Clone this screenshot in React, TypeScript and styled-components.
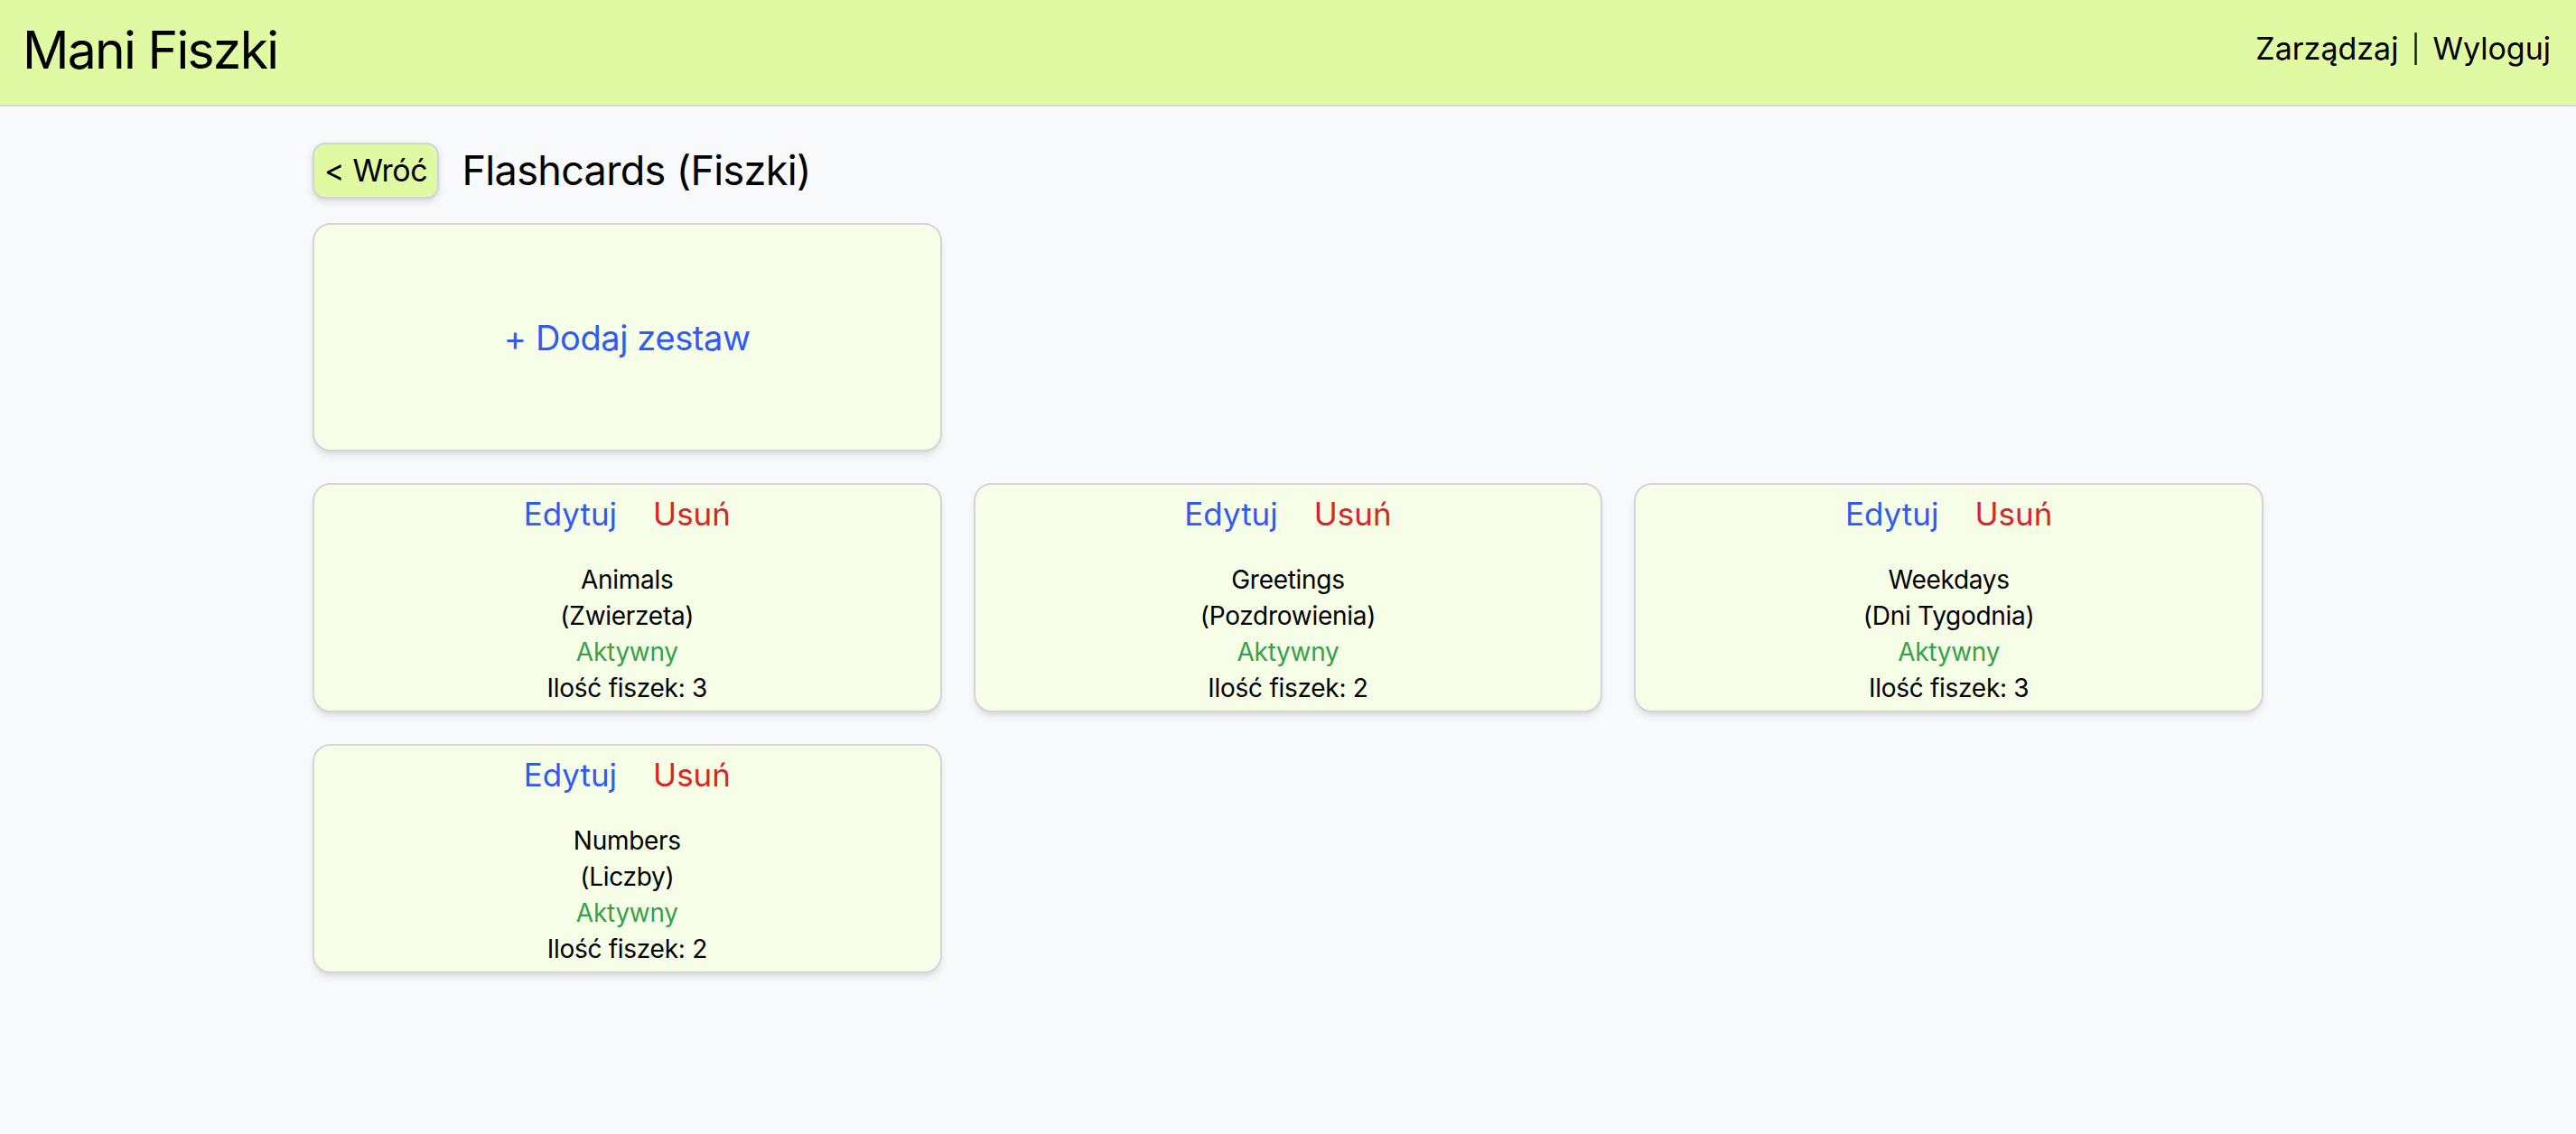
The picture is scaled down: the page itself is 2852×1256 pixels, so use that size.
import React from "react";
import styled, { createGlobalStyle } from "styled-components";

const GlobalStyle = createGlobalStyle`
  html, body {
    margin: 0;
    padding: 0;
    background: #f8f9fb;
    font-family: Inter, "Noto Sans", "DejaVu Sans", sans-serif;
    color: #000;
  }
  * { box-sizing: border-box; }
`;

const Page = styled.div`
  min-height: 1256px;
  background: #f8f9fb;
`;

const Header = styled.header`
  height: 118px;
  background: #e0f9a3;
  border-bottom: 2px solid #d3d5db;
  display: flex;
  align-items: center;
  justify-content: space-between;
  padding: 0 28px 0 25px;
`;

const Brand = styled.div`
  font-size: 57px;
  line-height: 1;
  font-weight: 400;
  letter-spacing: -0.03em;
  margin-top: -6px;
`;

const Nav = styled.nav`
  display: flex;
  align-items: center;
  font-size: 34px;
  line-height: 1;
  margin-top: -8px;
`;

const NavLink = styled.a`
  color: #000;
  text-decoration: none;
  cursor: pointer;
`;

const Divider = styled.span`
  margin: 0 14px;
  font-size: 30px;
  color: #111;
`;

const Main = styled.main`
  width: 2160px;
  margin: 0 auto;
  padding-top: 40px;
`;

const TitleRow = styled.div`
  display: flex;
  align-items: center;
  gap: 25px;
  margin-bottom: 27px;
`;

const BackButton = styled.button`
  height: 62px;
  padding: 0 11px;
  background: #e0f9a3;
  border: 2px solid #d3d5db;
  border-radius: 14px;
  box-shadow: 0 4px 8px rgba(0, 0, 0, 0.1), 0 1px 3px rgba(0, 0, 0, 0.08);
  font-family: inherit;
  font-size: 34px;
  letter-spacing: -0.01em;
  line-height: 1;
  color: #000;
  cursor: pointer;
`;

const Title = styled.h1`
  margin: 0;
  font-size: 45px;
  font-weight: 400;
  line-height: 1.2;
  letter-spacing: -0.015em;
`;

const Grid = styled.div`
  display: grid;
  grid-template-columns: repeat(3, 1fr);
  gap: 35px;
`;

const CardBase = styled.div`
  background: #f7fee8;
  border: 2px solid #d3d5db;
  border-radius: 20px;
  box-shadow: 0 6px 10px -2px rgba(0, 0, 0, 0.1), 0 2px 4px -1px rgba(0, 0, 0, 0.06);
`;

const AddCard = styled(CardBase)`
  grid-column: 1;
  height: 253px;
  display: flex;
  align-items: center;
  justify-content: center;
  font-size: 38px;
  letter-spacing: -0.01em;
  color: #2f5bf2;
  cursor: pointer;
`;

const SetCard = styled(CardBase)<{ $newRow?: boolean }>`
  height: 254px;
  padding: 8px 16px 5px;
  display: flex;
  flex-direction: column;
  align-items: center;
  ${(p) => (p.$newRow ? "grid-column-start: 1;" : "")}
`;

const Actions = styled.div`
  height: 48px;
  display: flex;
  align-items: center;
  justify-content: center;
  gap: 40px;
  font-size: 35px;
`;

const ActionLink = styled.a<{ $tone: "edit" | "delete" }>`
  color: ${(p) => (p.$tone === "edit" ? "#2f5bf2" : "#d82626")};
  cursor: pointer;
  text-decoration: none;
`;

const Info = styled.div`
  margin-top: 29px;
  display: flex;
  flex-direction: column;
  align-items: center;
  font-size: 28px;
  letter-spacing: -0.01em;
  line-height: 40px;
  text-align: center;
`;

const Line = styled.div<{ $active?: boolean }>`
  color: ${(p) => (p.$active ? "#38a148" : "#000")};
`;

type FlashSet = { name: string; pl: string; count: number };

const sets: FlashSet[] = [
  { name: "Animals", pl: "Zwierzeta", count: 3 },
  { name: "Greetings", pl: "Pozdrowienia", count: 2 },
  { name: "Weekdays", pl: "Dni Tygodnia", count: 3 },
  { name: "Numbers", pl: "Liczby", count: 2 },
];

export default function App() {
  return (
    <Page>
      <GlobalStyle />
      <Header>
        <Brand>Mani Fiszki</Brand>
        <Nav>
          <NavLink>Zarządzaj</NavLink>
          <Divider>|</Divider>
          <NavLink>Wyloguj</NavLink>
        </Nav>
      </Header>
      <Main>
        <TitleRow>
          <BackButton>&lt; Wróć</BackButton>
          <Title>Flashcards (Fiszki)</Title>
        </TitleRow>
        <Grid>
          <AddCard>+ Dodaj zestaw</AddCard>
          {sets.map((s, i) => (
            <SetCard key={s.name} $newRow={i === 0}>
              <Actions>
                <ActionLink $tone="edit">Edytuj</ActionLink>
                <ActionLink $tone="delete">Usuń</ActionLink>
              </Actions>
              <Info>
                <Line>{s.name}</Line>
                <Line>({s.pl})</Line>
                <Line $active>Aktywny</Line>
                <Line>Ilość fiszek: {s.count}</Line>
              </Info>
            </SetCard>
          ))}
        </Grid>
      </Main>
    </Page>
  );
}
